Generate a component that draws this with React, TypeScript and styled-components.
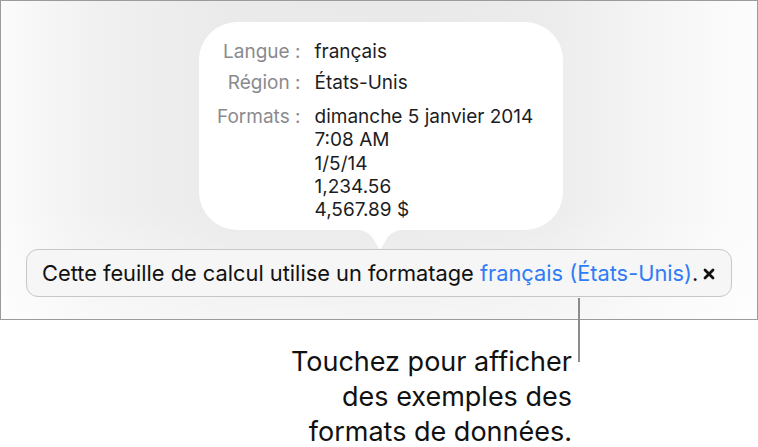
import React from "react";
import styled, { createGlobalStyle } from "styled-components";

const Global = createGlobalStyle`
  html, body { margin: 0; padding: 0; background: #ffffff; }
  body { font-family: Inter, "Noto Sans", "DejaVu Sans", sans-serif; -webkit-font-smoothing: antialiased; }
`;

const Page = styled.div`
  position: relative;
  width: 758px;
  height: 447px;
  overflow: hidden;
`;

const Frame = styled.div`
  box-sizing: border-box;
  width: 758px;
  height: 320px;
  border: 1px solid #9b9b9b;
  display: flex;
  flex-direction: column;
  align-items: center;
  background:
    linear-gradient(to bottom, rgba(255,255,255,0) 65%, rgba(255,255,255,0.55) 100%),
    linear-gradient(to right, #fbfbfb 0%, #f1f1f1 12%, #eaeaea 30%, #e9e9e9 55%, #ececec 72%, #f6f6f6 88%, #fcfcfc 100%);
`;

const Popover = styled.div`
  box-sizing: border-box;
  margin-top: 21px;
  width: 364px;
  height: 208px;
  margin-left: 3px;
  border-radius: 38px;
  background: #ffffff;
  padding: 18px 0 0 16px;
  display: grid;
  grid-template-columns: 86px auto;
  column-gap: 14px;
  align-content: start;
  font-size: 19px;
  line-height: 23.4px;
`;

const Label = styled.div<{ $gap?: number }>`
  color: #8a8a8e;
  text-align: right;
  margin-top: ${(p) => p.$gap ?? 0}px;
`;

const Value = styled.div<{ $gap?: number }>`
  color: #1d1d1f;
  margin-top: ${(p) => p.$gap ?? 0}px;
`;

const Pointer = styled.svg`
  display: block;
  width: 60px;
  height: 21px;
  margin-top: -1px;
  margin-left: 1px;
`;

const Banner = styled.div`
  box-sizing: border-box;
  width: 706px;
  height: 48px;
  margin-top: -1px;
  border: 1px solid #c7c7c7;
  border-radius: 12px;
  background: #f6f6f6;
  display: flex;
  align-items: center;
  padding-left: 15px;
  font-size: 21.8px;
  color: #111111;
  white-space: nowrap;
`;

const Link = styled.span`
  color: #2f7cf6;
`;

const Close = styled.svg`
  width: 12px;
  height: 12px;
  margin-left: 5px;
  margin-top: 2px;
`;

const Leader = styled.div`
  position: absolute;
  left: 578px;
  top: 298px;
  width: 2px;
  height: 64px;
  background: #8c8c8c;
`;

const Caption = styled.div`
  margin-top: 28px;
  padding-right: 186px;
  display: flex;
  flex-direction: column;
  align-items: flex-end;
  gap: 8px;
  font-size: 27px;
  line-height: 27px;
  color: #111111;
`;

const CaptionLine = styled.div`
  white-space: nowrap;
`;

const rows: { label: string; values: string[]; gap: number }[] = [
  { label: "Langue :", values: ["français"], gap: 0 },
  { label: "Région :", values: ["États-Unis"], gap: 8 },
  {
    label: "Formats :",
    values: ["dimanche 5 janvier 2014", "7:08 AM", "1/5/14", "1,234.56", "4,567.89 $"],
    gap: 10,
  },
];

const captionLines = ["Touchez pour afficher", "des exemples des", "formats de données."];

export default function App() {
  return (
    <Page>
      <Global />
      <Frame>
        <Popover>
          {rows.map((r) => (
            <React.Fragment key={r.label}>
              <Label $gap={r.gap}>{r.label}</Label>
              <Value $gap={r.gap}>
                {r.values.map((v) => (
                  <div key={v}>{v}</div>
                ))}
              </Value>
            </React.Fragment>
          ))}
        </Popover>
        <Pointer viewBox="0 0 60 21">
          <path d="M0 0 C 14 0 20 4 24 11 L 29 19.6 Q 30 21 31 19.6 L 36 11 C 40 4 46 0 60 0 Z" fill="#ffffff" />
        </Pointer>
        <Banner>
          Cette feuille de calcul utilise un formatage&nbsp;<Link>français (États-Unis)</Link>.
          <Close viewBox="0 0 12 12">
            <path d="M2 2 L10 10 M10 2 L2 10" stroke="#111" strokeWidth="2.8" strokeLinecap="round" />
          </Close>
        </Banner>
      </Frame>
      <Leader />
      <Caption>
        {captionLines.map((l) => (
          <CaptionLine key={l}>{l}</CaptionLine>
        ))}
      </Caption>
    </Page>
  );
}
